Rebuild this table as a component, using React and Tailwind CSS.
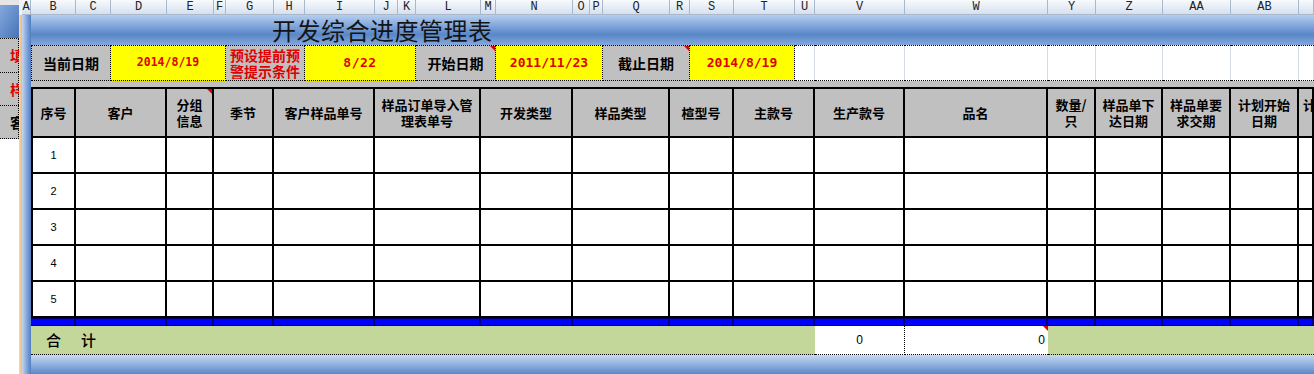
import React from "react";

const letters = ["A","B","C","D","E","F","G","H","I","J","K","L","M","N","O","P","Q","R","S","T","U","V","W","Y","Z","AA","AB",""];

const tableCols = [
  { span: "col-span-1", label: ["序号"] },
  { span: "col-span-2", label: ["客户"] },
  { span: "col-span-1", label: ["分组", "信息"], note: true },
  { span: "col-span-2", label: ["季节"] },
  { span: "col-span-2", label: ["客户样品单号"] },
  { span: "col-span-3", label: ["样品订单导入管", "理表单号"] },
  { span: "col-span-2", label: ["开发类型"] },
  { span: "col-span-3", label: ["样品类型"] },
  { span: "col-span-2", label: ["楦型号"] },
  { span: "col-span-2", label: ["主款号"] },
  { span: "col-span-1", label: ["生产款号"] },
  { span: "col-span-1", label: ["品名"] },
  { span: "col-span-1", label: ["数量/", "只"] },
  { span: "col-span-1", label: ["样品单下", "达日期"] },
  { span: "col-span-1", label: ["样品单要", "求交期"] },
  { span: "col-span-1", label: ["计划开始", "日期"] },
  { span: "col-span-1", label: ["计划完成", "日期"], clip: true },
];

function Note() {
  return (
    <span className="absolute top-0 right-0 w-0 h-0 border-l-[5px] border-l-transparent border-t-[5px] border-t-[#e00000]" />
  );
}

function Label({ span, children, note }) {
  return (
    <div className={`${span} relative flex items-center justify-center bg-[#c0c0c0] border-r border-t border-b border-dotted border-black text-[14px] font-bold text-black`}>
      {children}
      {note && <Note />}
    </div>
  );
}

function Value({ span, size, children }) {
  return (
    <div className={`${span} ${size} flex items-center justify-center bg-[#ffff00] border-r border-t border-b border-dotted border-black font-['DejaVu_Sans_Mono',monospace] font-bold text-[#e00000]`}>
      {children}
    </div>
  );
}

export default function App() {
  return (
    <div className="w-[1314px] h-[374px] overflow-hidden flex bg-white font-['Noto_Sans_CJK_SC',sans-serif]">
      {/* window behind, left edge */}
      <div className="w-[19px] shrink-0 flex flex-col overflow-hidden">
        <div className="h-[5px] bg-[#e6e6e6]" />
        <div className="h-[33px] bg-linear-to-br from-[#86a9dd] to-[#4674b8]" />
        <div className="h-[34px] flex items-center pl-[10px] bg-[#c0c0c0] border-t border-r border-dotted border-black text-[14px] font-bold text-[#e00000] whitespace-nowrap">填写</div>
        <div className="h-[33px] flex items-center pl-[10px] bg-[#c0c0c0] border-t border-r border-dotted border-black text-[14px] font-bold text-[#e00000] whitespace-nowrap">样品</div>
        <div className="h-[34px] flex items-center pl-[10px] bg-[#c0c0c0] border-t border-b border-r border-dotted border-black text-[14px] font-bold text-black whitespace-nowrap">客户</div>
        <div className="flex-1 bg-white" />
      </div>

      <div className="w-[3px] shrink-0 flex flex-col">
        <div className="h-[15px] bg-[#eef2f8]" />
        <div className="flex-1 bg-linear-to-r from-[#fbd7a8] to-[#f2b677]" />
      </div>

      <div className="flex-1 grid grid-cols-[9px_45px_35px_56px_47px_12px_48px_31px_70px_23px_18px_65px_15px_77px_17px_13px_67px_20px_44px_61px_20px_90px_143px_48px_67px_68px_68px_1fr] grid-rows-[15px_30px_36px_6px_51px_36px_36px_36px_36px_36px_8px_29px_19px]">
        {/* column letters */}
        {letters.map((l, i) => (
          <div key={"h" + i} className="flex items-center justify-center bg-linear-to-b from-[#f8fafd] to-[#d6e0ee] border-r border-b border-[#a9b8cc] font-['Liberation_Mono',monospace] text-[12px] leading-none text-[#222]">
            {l}
          </div>
        ))}

        {/* column A strip */}
        <div className="row-span-12 bg-linear-to-r from-[#c3d6f1] via-[#86a8db] to-[#4f7ec2]" />

        {/* title */}
        <div className="col-span-27 flex items-center pl-[241px] bg-linear-to-b from-[#b6ceef] via-[#5987c8] via-65% to-[#84a7db]">
          <span className="text-[24px] leading-none tracking-[0.5px] text-[#141414]">开发综合进度管理表</span>
        </div>

        {/* info row */}
        <Label span="col-span-2 border-l">当前日期</Label>
        <Value span="col-span-3" size="text-[11.5px]">2014/8/19</Value>
        <div className="col-span-2 flex items-center justify-center bg-[#c0c0c0] border-r border-t border-b border-dotted border-black text-[14px] leading-[16px] font-bold text-[#e00000] text-center">
          预设提前预<br />警提示条件
        </div>
        <Value span="col-span-3" size="text-[13px] tracking-[0.5px]">8/22</Value>
        <Label span="col-span-2" note>开始日期</Label>
        <Value span="col-span-3" size="text-[13px]">2011/11/23</Value>
        <Label span="col-span-2" note>截止日期</Label>
        <Value span="col-span-2" size="text-[13px]">2014/8/19</Value>
        {[0, 1, 2, 3, 4, 5, 6, 7].map((i) => (
          <div key={"w" + i} className="bg-white border-t border-b border-dotted border-black">
            <div className="h-full border-r border-[#d3dae6]" />
          </div>
        ))}

        {/* spacer row */}
        <div className="col-span-27 bg-[#c0c0c0]" />

        {/* table header */}
        {tableCols.map((c, i) => (
          <div
            key={"t" + i}
            className={`${c.span} relative flex items-center overflow-hidden bg-[#c0c0c0] border-t-2 border-r-2 border-b-2 border-black text-[13px] leading-[16px] font-bold text-black ${i === 0 ? "border-l-2" : ""} ${c.clip ? "justify-start pl-[2px]" : "justify-center"}`}
          >
            <span className={`text-center ${c.clip ? "w-[56px] shrink-0" : ""}`}>
              {c.label.map((t, j) => (
                <React.Fragment key={j}>
                  {j > 0 && <br />}
                  {t}
                </React.Fragment>
              ))}
            </span>
            {c.note && <Note />}
          </div>
        ))}

        {/* data rows */}
        {[1, 2, 3, 4, 5].map((n) =>
          tableCols.map((c, i) => (
            <div
              key={n + "-" + i}
              className={`${c.span} flex items-center justify-center bg-white border-r-2 border-b-2 border-black font-['Liberation_Sans',sans-serif] text-[11px] text-black ${i === 0 ? "border-l-2" : ""}`}
            >
              {i === 0 ? n : ""}
            </div>
          ))
        )}

        {/* blue band */}
        {tableCols.map((c, i) => (
          <div key={"b" + i} className={`${c.span} bg-[#0000ff] border-y border-y-[#00005e] border-r-2 border-r-[#000080]`} />
        ))}

        {/* total row */}
        <div className="col-span-20 flex items-center bg-[#c4d79b] border-b border-dotted border-black">
          <div className="w-[80px] flex justify-center gap-[20px] text-[15px] font-medium text-black">
            <span>合</span>
            <span>计</span>
          </div>
        </div>
        <div className="flex items-center justify-center bg-white border-r border-b border-dotted border-black font-['Liberation_Sans',sans-serif] text-[12px] text-black">0</div>
        <div className="relative flex items-center justify-end pr-[3px] bg-white border-b border-dotted border-black font-['Liberation_Sans',sans-serif] text-[12px] text-black">
          0
          <Note />
        </div>
        <div className="col-span-5 bg-[#c4d79b] border-b border-dotted border-black" />

        {/* bottom band */}
        <div className="col-span-27 bg-linear-to-b from-[#c8daf2] to-[#5a88ca]" />
      </div>
    </div>
  );
}
